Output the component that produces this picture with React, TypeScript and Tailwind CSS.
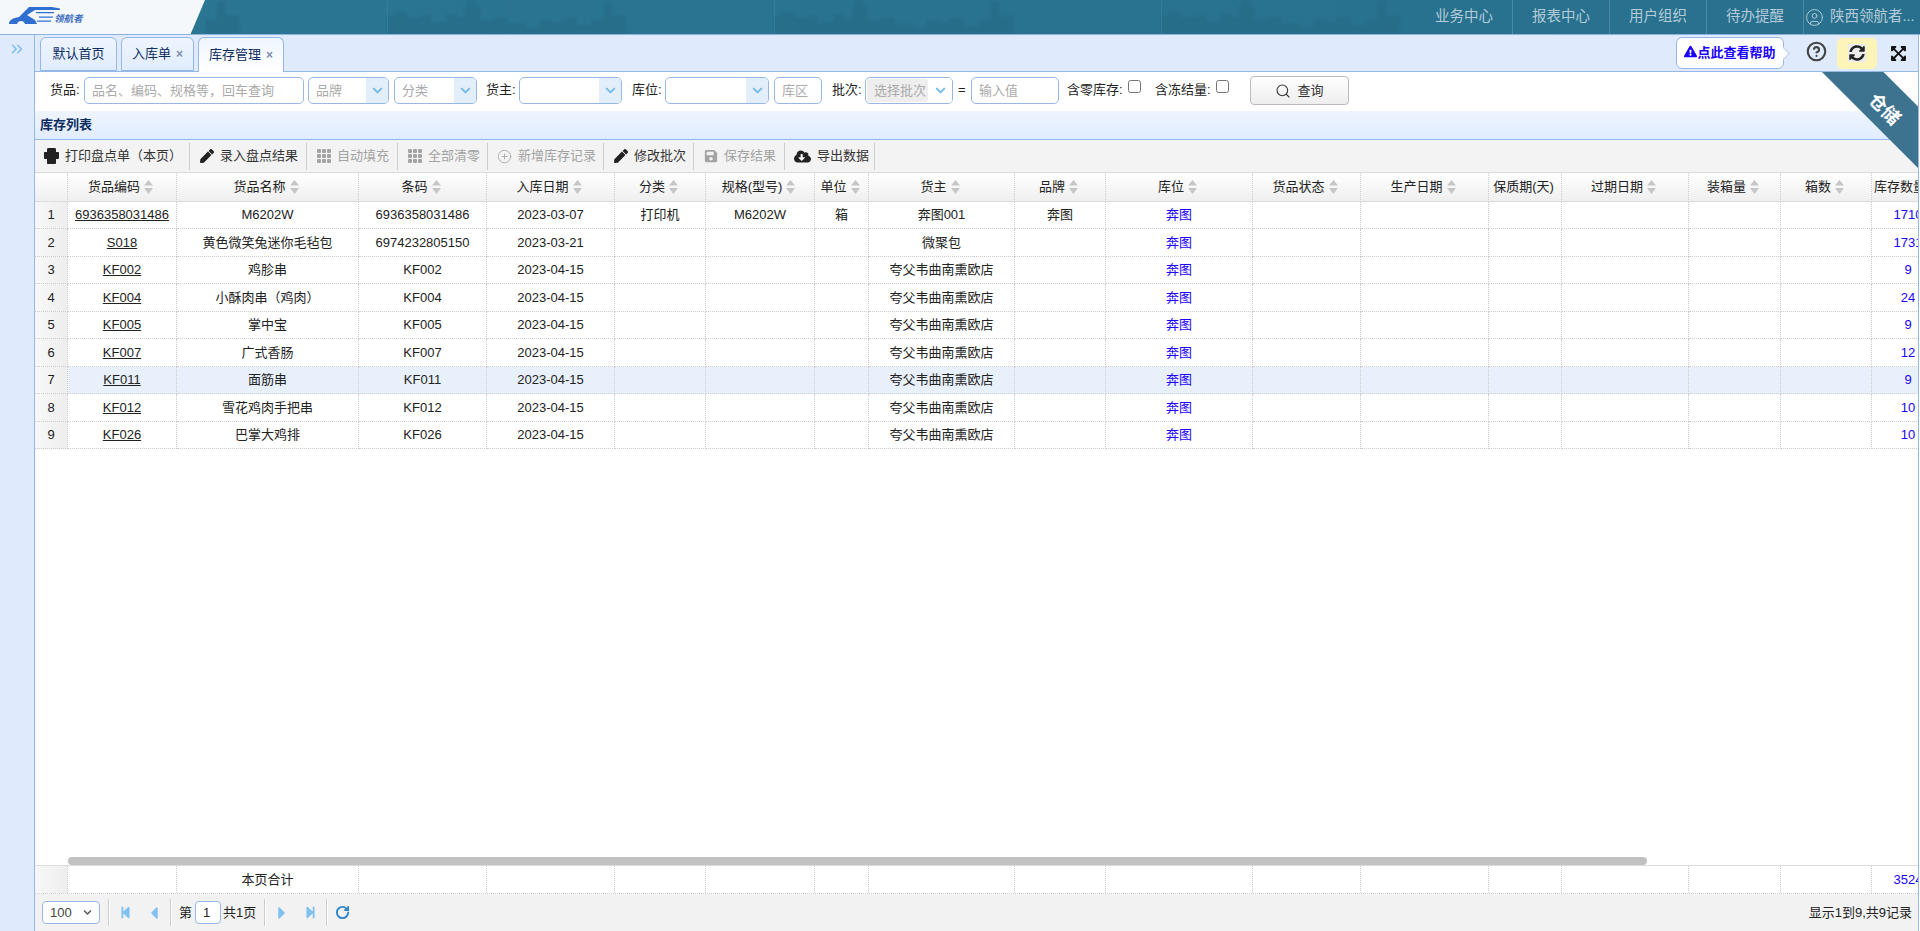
import React from 'react';
import {
	FaCaretLeft,
	FaCaretRight,
	FaChevronDown,
	FaCloudDownloadAlt,
	FaExclamationTriangle,
	FaExpandArrowsAlt,
	FaPen,
	FaSave,
	FaStepBackward,
	FaStepForward,
	FaSyncAlt,
} from 'react-icons/fa';
import { ChevronDown, ChevronsRight, CircleHelp, CirclePlus, CircleUser, RotateCw, Search } from 'lucide-react';

const columns = [
	{ w: 'w-[33px]', label: '' },
	{ w: 'w-[109px]', label: '货品编码' },
	{ w: 'w-[182px]', label: '货品名称' },
	{ w: 'w-[128px]', label: '条码' },
	{ w: 'w-[128px]', label: '入库日期' },
	{ w: 'w-[91px]', label: '分类' },
	{ w: 'w-[109px]', label: '规格(型号)' },
	{ w: 'w-[54px]', label: '单位' },
	{ w: 'w-[146px]', label: '货主' },
	{ w: 'w-[91px]', label: '品牌' },
	{ w: 'w-[147px]', label: '库位' },
	{ w: 'w-[108px]', label: '货品状态' },
	{ w: 'w-[128px]', label: '生产日期' },
	{ w: 'w-[73px]', label: '保质期(天)', noSort: true },
	{ w: 'w-[127px]', label: '过期日期' },
	{ w: 'w-[92px]', label: '装箱量' },
	{ w: 'w-[91px]', label: '箱数' },
	{ w: 'w-[73px]', label: '库存数量' },
];

const shop = '夸父韦曲南熏欧店';

const rows = [
	{ h: 'h-[27px]', code: '6936358031486', name: 'M6202W', bar: '6936358031486', date: '2023-03-07', cat: '打印机', spec: 'M6202W', unit: '箱', owner: '奔图001', brand: '奔图', qty: '1710' },
	{ h: 'h-[28px]', code: 'S018', name: '黄色微笑兔迷你毛毡包', bar: '6974232805150', date: '2023-03-21', owner: '微聚包', qty: '1731' },
	{ h: 'h-[27px]', code: 'KF002', name: '鸡胗串', bar: 'KF002', date: '2023-04-15', owner: shop, qty: '9' },
	{ h: 'h-[28px]', code: 'KF004', name: '小酥肉串（鸡肉）', bar: 'KF004', date: '2023-04-15', owner: shop, qty: '24' },
	{ h: 'h-[27px]', code: 'KF005', name: '掌中宝', bar: 'KF005', date: '2023-04-15', owner: shop, qty: '9' },
	{ h: 'h-[28px]', code: 'KF007', name: '广式香肠', bar: 'KF007', date: '2023-04-15', owner: shop, qty: '12' },
	{ h: 'h-[27px]', code: 'KF011', name: '面筋串', bar: 'KF011', date: '2023-04-15', owner: shop, qty: '9', active: true },
	{ h: 'h-[28px]', code: 'KF012', name: '雪花鸡肉手把串', bar: 'KF012', date: '2023-04-15', owner: shop, qty: '10' },
	{ h: 'h-[27px]', code: 'KF026', name: '巴掌大鸡排', bar: 'KF026', date: '2023-04-15', owner: shop, qty: '10' },
];

function PrintIcon() {
	return (
		<svg viewBox="0 0 15 16" className="w-[15px] h-[16px]" fill="#222">
			<path d="M4.500 0h6c1 0 1.500.6 1.500 1.500V4h2c.6 0 1 .4 1 1v5c0 .6-.4 1-1 1h-2v4c0 .6-.4 1-1 1H4c-.6 0-1-.4-1-1v-4H1c-.6 0-1-.4-1-1V5c0-.6.4-1 1-1h2V1.500C3 .6 3.500 0 4.500 0z" />
		</svg>
	);
}

function DotsIcon() {
	return (
		<svg viewBox="0 0 14 14" className="w-[14px] h-[14px]" fill="#a3a3a3">
			{[0, 5, 10].flatMap((y) =>
				[0, 5, 10].map((x) => <rect key={`${x}-${y}`} x={x} y={y} width="4" height="4" rx="1" />)
			)}
		</svg>
	);
}

const tools = [
	{ w: 'w-[155px]', pl: 'pl-[9px]', icon: <PrintIcon />, label: '打印盘点单（本页）' },
	{ w: 'w-[117px]', pl: 'pl-[10px]', icon: <FaPen className="size-[14px] text-[#222]" />, label: '录入盘点结果' },
	{ w: 'w-[91px]', pl: 'pl-[10px]', icon: <DotsIcon />, label: '自动填充', off: true },
	{ w: 'w-[90px]', pl: 'pl-[10px]', icon: <DotsIcon />, label: '全部清零', off: true },
	{ w: 'w-[116px]', pl: 'pl-[9px]', icon: <CirclePlus className="size-[15px] text-[#a3a3a3]" strokeWidth={1.3} />, label: '新增库存记录', off: true },
	{ w: 'w-[90px]', pl: 'pl-[10px]', icon: <FaPen className="size-[14px] text-[#222]" />, label: '修改批次' },
	{ w: 'w-[91px]', pl: 'pl-[10px]', icon: <FaSave className="size-[14px] text-[#a3a3a3]" />, label: '保存结果', off: true },
	{ w: 'w-[90px]', pl: 'pl-[9px]', icon: <FaCloudDownloadAlt className="size-[17px] text-[#222]" />, label: '导出数据' },
];

function Combo({ w, text, disabled }: { w: string; text?: string; disabled?: boolean }) {
	return (
		<div className={`${w} h-[27px] flex border border-[#95b8e7] rounded-[5px] overflow-hidden bg-white shrink-0`}>
			<div className={`flex-1 min-w-0 whitespace-nowrap overflow-hidden flex items-center pl-[7px] text-[#aaa] ${disabled ? 'bg-[#eee] m-px rounded-[3px]' : ''}`}>{text}</div>
			<div className={`${disabled ? 'w-[23px] bg-white' : 'w-[22px] bg-[#e3eefb]'} flex items-center justify-center shrink-0`}>
				<ChevronDown className="size-[15px] text-[#74bcf0]" strokeWidth={3.2} />
			</div>
		</div>
	);
}

function TextInput({ w, placeholder }: { w: string; placeholder: string }) {
	return (
		<input
			placeholder={placeholder}
			className={`${w} h-[27px] shrink-0 border border-[#95b8e7] rounded-[5px] bg-white pl-[7px] outline-none placeholder:text-[#aaa]`}
		/>
	);
}

function SortIcon() {
	return (
		<svg viewBox="0 0 9 14" className="w-[9px] h-[14px] shrink-0" fill="#c6c6c6">
			<path d="M4.500 0 9 5.500H0zM0 8h9l-4.500 6z" />
		</svg>
	);
}

function Cols() {
	return (
		<colgroup>
			{columns.map((c) => (
				<col key={c.label} className={c.w} />
			))}
		</colgroup>
	);
}

function Skyline() {
	return (
		<svg viewBox="0 0 1211 34" className="flex-1 h-[34px] min-w-0">
			{[-205, 182, 569, 956].map((x) => (
				<g key={x} transform={`translate(${x} 0)`}>
					<path
						className="blur-[1px]"
						fill="#236884"
						fillOpacity="0.5"
						d="M0 34V16h8v-4h12v6h14v-2h10v6h16v-8h10v4h8V6h3V0h8v6h4v14h14v-2h14v6h18v4h14v-8h12v2h10v-4h14v8h16v-6h12V2h8v14h14v18z"
					/>
					<rect x="0" y="0" width="1" height="34" fill="#3b83a0" fillOpacity="0.6" />
				</g>
			))}
		</svg>
	);
}

function Logo() {
	return (
		<div className="w-[205px] h-full bg-[#f5f8fb] [clip-path:polygon(0_0,100%_0,93%_100%,0_100%)] shrink-0">
			<svg viewBox="0 0 100 34" className="w-[100px] h-[34px]">
				<path d="M9 24c0-4 4-6 10-7L29 7h23l8 1.500V10H35l-8 5 8 5 2 4H25c-1-4-7-4-8 0z" fill="#2f6fd2" />
				<path d="M36 12h18v1.300H36zM39 16.500h14v1.300H39zM37 20.500h14v1.300H37z" fill="#2f6fd2" />
				<text x="54" y="22" fontSize="9.500" fontWeight="700" fontStyle="italic" fill="#3d6fc2" fontFamily="'Liberation Sans','Noto Sans CJK SC',sans-serif">
					领航者
				</text>
			</svg>
		</div>
	);
}

function Sep() {
	return <div className="w-[2px] h-[27px] border-l border-[#ccc] bg-white shrink-0" />;
}

function App() {
	return (
		<div className="relative w-[1920px] h-[931px] overflow-hidden flex flex-col bg-white text-[13px] text-[#222] font-['Liberation_Sans','Noto_Sans_CJK_SC',sans-serif]">
			{/* top bar */}
			<div className="h-[35px] shrink-0 flex border-b border-[#8db2dc] bg-linear-to-r from-[#2a7693] to-[#28708e]">
				<Logo />
				<Skyline />
				{['业务中心', '报表中心', '用户组织', '待办提醒'].map((t) => (
					<div key={t} className="w-[97px] flex items-center justify-center border-r border-[#4b8aa5] text-[14.5px] text-[#b4ccd8] shrink-0">
						{t}
					</div>
				))}
				<div className="w-[116px] flex items-center text-[14.5px] text-[#b4ccd8] shrink-0 whitespace-nowrap overflow-hidden">
					<CircleUser className="size-[19px] ml-[1px] mr-[6px] shrink-0" strokeWidth={1.2} />
					<span>陕西领航者...</span>
				</div>
			</div>

			<div className="flex-1 min-h-0 flex">
				{/* collapsed side menu */}
				<div className="w-[35px] shrink-0 bg-[#dfeafd] border-r border-[#95b8e7] flex justify-center pt-[5px]">
					<ChevronsRight className="size-[18px] text-[#74bcf0]" strokeWidth={1.8} />
				</div>

				<div className="flex-1 min-w-0 flex flex-col border-r border-[#95b8e7] mr-px">
					{/* tabs */}
					<div className="h-[37px] shrink-0 flex items-end pl-[5px] bg-[#dfeafd] border-b border-[#95b8e7]">
						<div className="w-[77px] h-[34px] flex items-center justify-center border border-[#95b8e7] rounded-t-[6px] bg-linear-to-b from-[#eff5ff] to-[#e0ecff] text-[#0e2d5f]">
							默认首页
						</div>
						<div className="ml-[4px] w-[73px] h-[34px] flex items-center justify-center gap-[5px] border border-[#95b8e7] rounded-t-[6px] bg-linear-to-b from-[#eff5ff] to-[#e0ecff] text-[#0e2d5f]">
							入库单<span className="text-[12px] font-bold text-[#7d8fb0]">×</span>
						</div>
						<div className="ml-[4px] w-[86px] h-[35px] -mb-px flex items-center justify-center gap-[5px] border border-b-0 border-[#95b8e7] rounded-t-[6px] bg-linear-to-b from-[#eff5ff] to-white text-[#0e2d5f]">
							库存管理<span className="text-[12px] font-bold text-[#7d8fb0]">×</span>
						</div>
						<div className="ml-auto h-full flex items-center">
							<div className="relative w-[108px] h-[32px] flex items-center justify-center border border-[#95b8e7] rounded-[6px] bg-white text-[#1a00ff]">
								<FaExclamationTriangle className="size-[13px] -mt-[4px]" />
								<span className="font-semibold">点此查看帮助</span>
								<div className="absolute -right-[5px] top-[11px] size-[9px] rotate-45 bg-white border-t border-r border-[#b5cdee]" />
							</div>
							<CircleHelp className="ml-[22px] size-[21px] text-[#444] -mt-[3px]" strokeWidth={2.4} />
							<div className="ml-[10px] w-[40px] h-[31px] flex items-center justify-center rounded-[5px] bg-[#fdf5b8]">
								<div className="size-[18px] bg-[#ececec] flex items-center justify-center">
									<FaSyncAlt className="size-[16px] text-[#222]" />
								</div>
							</div>
							<FaExpandArrowsAlt className="ml-[13px] mr-[11px] size-[17px] text-[#111]" />
						</div>
					</div>

					{/* filters */}
					<div className="h-[39px] shrink-0 flex items-start pt-[5px] pl-[15px] bg-white">
						<label className="w-[34px] leading-[26px] shrink-0">货品:</label>
						<TextInput w="w-[220px]" placeholder="品名、编码、规格等，回车查询" />
						<div className="ml-[4px]">
							<Combo w="w-[81px]" text="品牌" />
						</div>
						<div className="ml-[5px]">
							<Combo w="w-[83px]" text="分类" />
						</div>
						<label className="ml-[9px] w-[33px] leading-[26px] shrink-0">货主:</label>
						<Combo w="w-[103px]" />
						<label className="ml-[10px] w-[33px] leading-[26px] shrink-0">库位:</label>
						<Combo w="w-[104px]" />
						<div className="ml-[5px]">
							<TextInput w="w-[48px]" placeholder="库区" />
						</div>
						<label className="ml-[10px] w-[33px] leading-[26px] shrink-0">批次:</label>
						<Combo w="w-[88px]" text="选择批次" disabled />
						<span className="ml-[5px] w-[13px] leading-[26px] shrink-0">=</span>
						<TextInput w="w-[88px]" placeholder="输入值" />
						<label className="ml-[8px] w-[61px] leading-[26px] shrink-0 whitespace-nowrap">含零库存:</label>
						<input type="checkbox" className="w-[13px] h-[13px] mt-[3px] shrink-0" />
						<label className="ml-[14px] w-[61px] leading-[26px] shrink-0 whitespace-nowrap">含冻结量:</label>
						<input type="checkbox" className="w-[13px] h-[13px] mt-[3px] shrink-0" />
						<button className="ml-[21px] -mt-px w-[99px] h-[29px] flex items-center justify-center gap-[6px] border border-[#bbb] rounded-[4px] bg-linear-to-b from-white to-[#ededed] text-[#333]">
							<Search className="size-[16px]" strokeWidth={1.6} />
							查询
						</button>
					</div>

					{/* panel title */}
					<div className="h-[29px] shrink-0 flex items-center pl-[5px] font-bold text-[#0e2d5f] border-b border-[#95b8e7] bg-linear-to-b from-[#eff5ff] to-[#e0ecff]">
						库存列表
					</div>

					{/* toolbar */}
					<div className="h-[33px] shrink-0 flex items-center bg-[#f3f3f3] border-b border-[#dcdcdc]">
						{tools.map((t) => (
							<div key={t.label} className={`${t.w} ${t.pl} h-[27px] shrink-0 flex items-center gap-[6px] whitespace-nowrap border-r border-[#ccc] ${t.off ? 'text-[#a3a3a3]' : 'text-[#333]'}`}>
								{t.icon}
								{t.label}
							</div>
						))}
					</div>

					{/* grid */}
					<div className="flex-1 min-h-0 flex flex-col overflow-hidden bg-white">
						<table className="table-fixed border-separate border-spacing-0 w-[1910px] shrink-0">
							<Cols />
							<thead>
								<tr className="h-[29px]">
									{columns.map((c) => (
										<th key={c.label} className="font-normal whitespace-nowrap overflow-hidden border-r border-b border-r-[#ccc] border-b-[#ddd] [border-right-style:dotted] bg-linear-to-b from-white to-[#efefef]">
											{c.label && (
												<div className="flex items-center justify-center gap-[4px] pr-[3px]">
													{c.label}
													{!c.noSort && <SortIcon />}
												</div>
											)}
										</th>
									))}
								</tr>
							</thead>
							<tbody>
								{rows.map((r, i) => (
									<tr key={r.code} className={`${r.h} ${r.active ? 'bg-[#e8f0fc]' : ''}`}>
										<td className="text-center border-r border-b border-dotted border-[#ccc] bg-linear-to-r from-[#f8f8f8] to-[#eee]">{i + 1}</td>
										<td className="text-center underline border-r border-b border-dotted border-[#ccc]">{r.code}</td>
										<td className="text-center border-r border-b border-dotted border-[#ccc]">{r.name}</td>
										<td className="text-center border-r border-b border-dotted border-[#ccc]">{r.bar}</td>
										<td className="text-center border-r border-b border-dotted border-[#ccc]">{r.date}</td>
										<td className="text-center border-r border-b border-dotted border-[#ccc]">{r.cat}</td>
										<td className="text-center border-r border-b border-dotted border-[#ccc]">{r.spec}</td>
										<td className="text-center border-r border-b border-dotted border-[#ccc]">{r.unit}</td>
										<td className="text-center border-r border-b border-dotted border-[#ccc]">{r.owner}</td>
										<td className="text-center border-r border-b border-dotted border-[#ccc]">{r.brand}</td>
										<td className="text-center text-[#1a00ff] border-r border-b border-dotted border-[#ccc]">奔图</td>
										{[0, 1, 2, 3, 4, 5].map((k) => (
											<td key={k} className="border-r border-b border-dotted border-[#ccc]" />
										))}
										<td className="text-center text-[#1a00ff] border-r border-b border-dotted border-[#ccc]">{r.qty}</td>
									</tr>
								))}
							</tbody>
						</table>
						<div className="mt-auto ml-[33px] w-[1579px] h-[8px] shrink-0 rounded-[4px] bg-[#c1c1c1]" />
					</div>

					{/* page total */}
					<div className="shrink-0 overflow-hidden border-t border-[#ddd] border-b border-b-[#ccc] [border-bottom-style:dotted]">
						<table className="table-fixed border-separate border-spacing-0 w-[1910px]">
							<Cols />
							<tbody>
								<tr className="h-[27px]">
									{columns.map((c, i) => (
										<td key={c.label} className={`text-center border-r border-dotted border-[#ccc] ${i === 0 ? 'bg-linear-to-r from-[#f8f8f8] to-[#eee]' : ''} ${i === 17 ? 'text-[#1a00ff]' : ''}`}>
											{i === 2 ? '本页合计' : i === 17 ? '3524' : ''}
										</td>
									))}
								</tr>
							</tbody>
						</table>
					</div>

					{/* pagination */}
					<div className="h-[37px] shrink-0 flex items-center pl-[7px] pr-[6px] bg-[#f2f2f2]">
						<div className="w-[58px] h-[23px] flex items-center justify-between px-[7px] border border-[#95b8e7] rounded-[4px] bg-white text-[#444]">
							100
							<FaChevronDown className="size-[9px] text-[#555]" />
						</div>
						<div className="ml-[8px]"><Sep /></div>
						<FaStepBackward className="ml-[9px] size-[13px] text-[#7fc1f1]" />
						<FaCaretLeft className="ml-[12px] size-[20px] text-[#7fc1f1]" />
						<div className="ml-[6px]"><Sep /></div>
						<span className="ml-[7px]">第</span>
						<div className="ml-[3px] w-[26px] h-[23px] flex items-center pl-[7px] border border-[#95b8e7] rounded-[4px] bg-white">1</div>
						<span className="ml-[2px]">共1页</span>
						<div className="ml-[8px]"><Sep /></div>
						<FaCaretRight className="ml-[6px] size-[20px] text-[#7fc1f1]" />
						<FaStepForward className="ml-[12px] size-[13px] text-[#7fc1f1]" />
						<div className="ml-[9px]"><Sep /></div>
						<RotateCw className="ml-[7px] size-[15px] text-[#2d85c9]" strokeWidth={3} />
						<span className="ml-auto">显示1到9,共9记录</span>
					</div>
				</div>
			</div>

			{/* warehouse ribbon over the top right corner */}
			<div className="absolute top-[72px] right-[2px] w-[96px] h-[96px] overflow-hidden pointer-events-none [clip-path:polygon(0_0,64%_0,100%_36%,100%_100%)] bg-[#3d738f]">
				<span className="absolute left-[44px] top-[24px] rotate-45 text-[18px] font-bold text-white whitespace-nowrap">仓储</span>
			</div>
		</div>
	);
}

export default App;
